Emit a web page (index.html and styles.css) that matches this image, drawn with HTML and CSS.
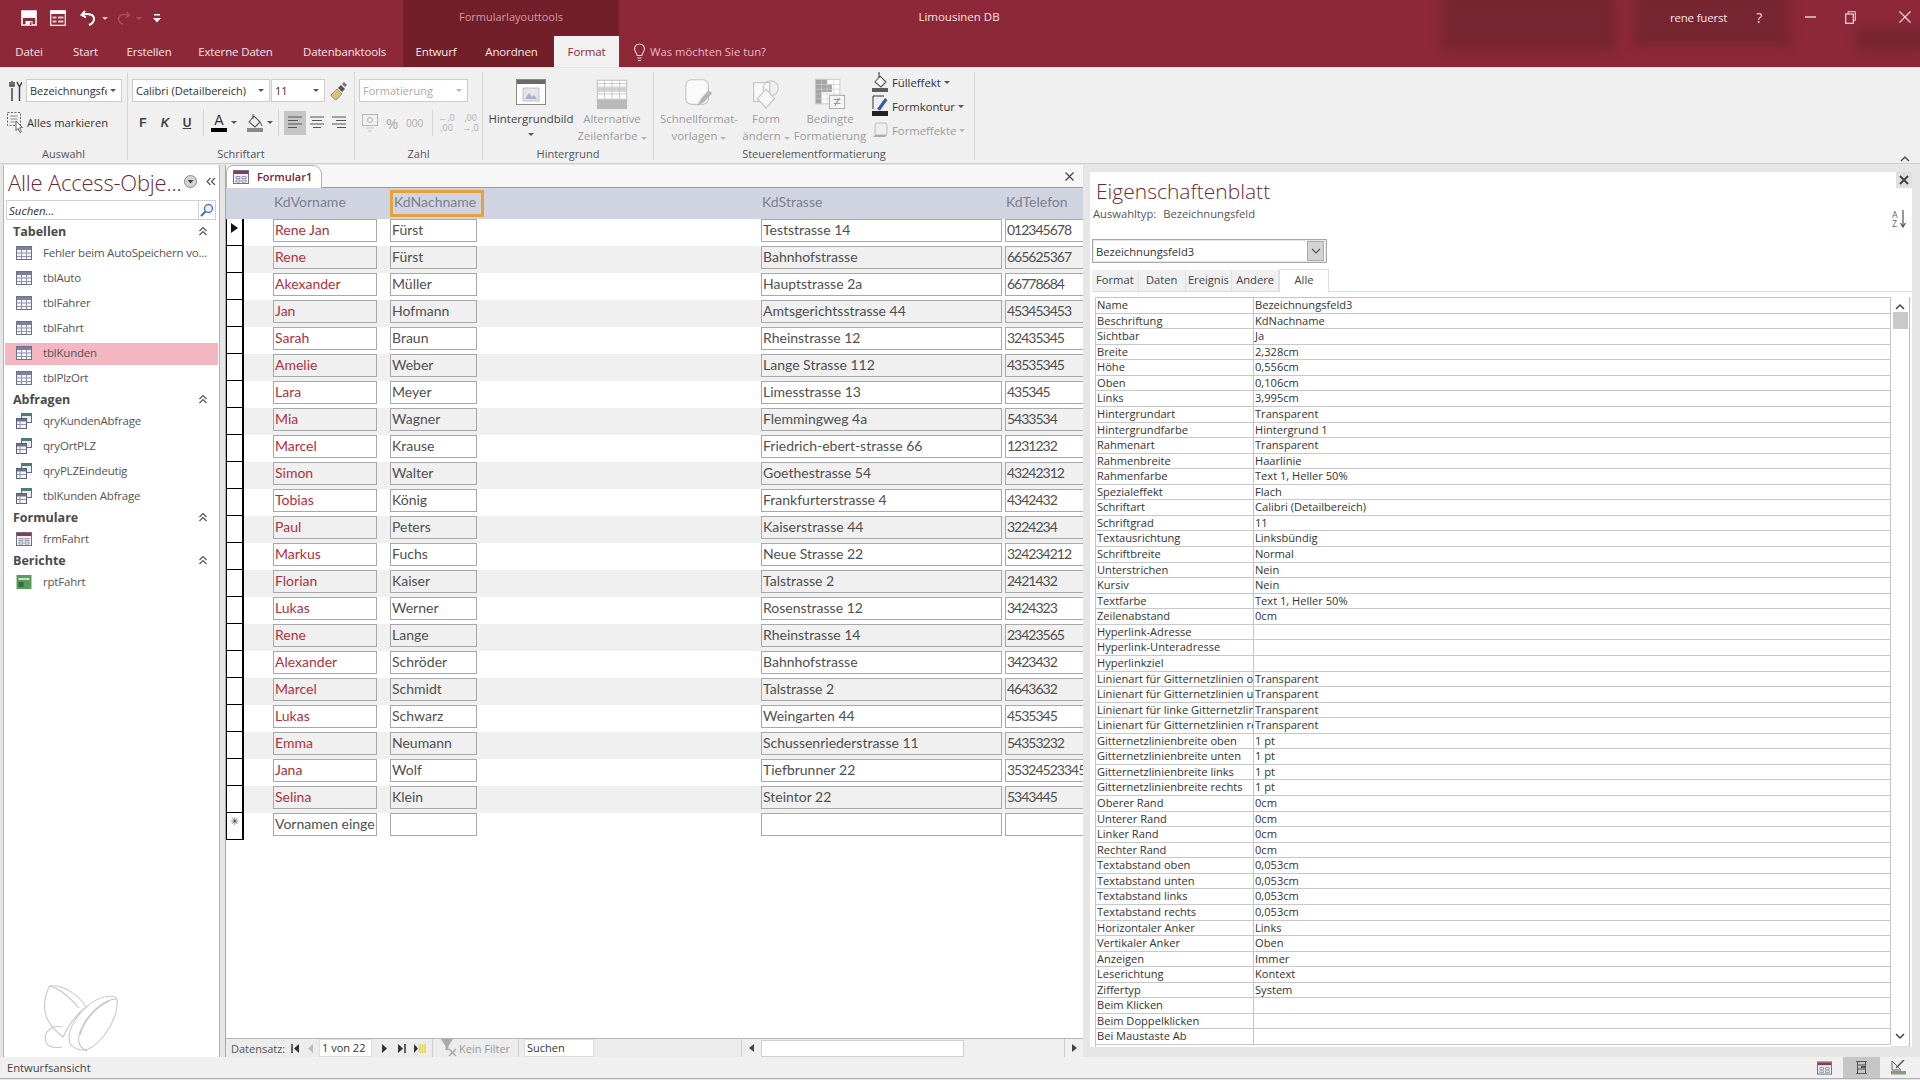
FILE: index.html
```html
<!DOCTYPE html>
<html lang="de">
<head>
<meta charset="utf-8">
<title>Limousinen DB</title>
<link rel="stylesheet" href="styles.css">
</head>
<body>
<svg class="defs" width="0" height="0">
  <symbol id="tbl" viewBox="0 0 16 14"><rect x=".5" y=".5" width="15" height="13" fill="#f4f4fa" stroke="#6c7088"/><rect x="1" y="1" width="14" height="3" fill="#7d8199"/><path d="M1 7h14M1 10.500h14M5.500 4v9M10.500 4v9" stroke="#8f93ad" fill="none"/></symbol>
  <symbol id="qry" viewBox="0 0 16 16"><rect x="5.500" y=".5" width="10" height="9" fill="#e9edf0" stroke="#4f7a78"/><rect x="6" y="1" width="9" height="2" fill="#4f7a78"/><rect x=".5" y="5.500" width="10" height="10" fill="#f6f6fa" stroke="#5c6078"/><rect x="1" y="6" width="9" height="2.500" fill="#6c7088"/><path d="M1 11.500h9M4 8.500v7" stroke="#8f93ad" fill="none"/></symbol>
  <symbol id="frm" viewBox="0 0 16 14"><rect x=".5" y=".5" width="15" height="13" fill="#f0f0f6" stroke="#6c7088"/><rect x="1" y="1" width="14" height="3" fill="#8a3a55"/><path d="M3 6.500h4v2H3zM9 6.500h4v2H9zM3 10h4v2H3zM9 10h4v2H9z" fill="#fff" stroke="#6c7088" stroke-width=".7"/></symbol>
  <symbol id="chev2" viewBox="0 0 10 10"><path d="M1.500 5l3.500-3.500L8.500 5M1.500 9L5 5.500 8.500 9" fill="none" stroke="#555" stroke-width="1.200"/></symbol>
</svg>

<header class="titlebar">
  <div class="patch patch-a"></div>
  <div class="patch patch-b"></div>
  <div class="patch patch-c"></div>
  <div class="toprow">
    <div class="qat">
      <svg class="q-save" width="16" height="16" viewBox="0 0 16 16"><path d="M1 1h14v14H1z" fill="none" stroke="#fff" stroke-width="1.600"/><path d="M1 1h14v7H1zM4.500 11h7v4h-7z" fill="#fff"/><path d="M9 12h1.500v3H9z" fill="#8c2838"/></svg>
      <svg class="q-form" width="16" height="16" viewBox="0 0 16 16"><rect x=".7" y=".7" width="14.600" height="14.600" fill="none" stroke="#fff" stroke-width="1.200"/><rect x="1" y="1" width="14" height="3" fill="#fff"/><path d="M2.500 6.500h4v2h-4zM8 6.500h5.500v2H8zM2.500 10.500h4v2h-4zM8 10.500h5.500v2H8z" fill="#e9c8cc"/></svg>
      <svg class="q-undo" width="18" height="18" viewBox="0 0 18 18"><path d="M5 2L1.500 6 6 8.500" fill="none" stroke="#fff" stroke-width="2"/><path d="M2.500 6C8 4 14 5.500 14 10c0 3-2.500 5-5 6" fill="none" stroke="#fff" stroke-width="2"/></svg>
      <i class="caret q-c1"></i>
      <svg class="q-redo" width="16" height="18" viewBox="0 0 18 18"><path d="M13 2l3.500 4L12 8.500" fill="none" stroke="#a9505c" stroke-width="1.600"/><path d="M15.500 6C10 4 4 5.500 4 10c0 3 2.500 5 5 6" fill="none" stroke="#a9505c" stroke-width="1.600"/></svg>
      <i class="caret caret-dim q-c2"></i>
      <svg class="q-more" width="8" height="9" viewBox="0 0 8 9"><path d="M1 0h6v1.500H1z" fill="#fff"/><path d="M0 4h8L4 8.500z" fill="#fff"/></svg>
    </div>
    <div class="ctx-label">Formularlayouttools</div>
    <div class="appname">Limousinen DB</div>
    <div class="account">
      <span class="user">rene fuerst</span>
      <span class="help">?</span>
      <svg class="w-min" width="11" height="2" viewBox="0 0 11 2"><path d="M0 1h11" stroke="#f3d9dc" stroke-width="1.400"/></svg>
      <svg class="w-max" width="11" height="13" viewBox="0 0 11 13"><path d="M3 2.500V.7h7.300v8.800H8.500" fill="none" stroke="#f3d9dc"/><rect x=".7" y="3" width="7.600" height="9.300" fill="none" stroke="#f3d9dc" stroke-width="1.200"/></svg>
      <svg class="w-close" width="12" height="12" viewBox="0 0 12 12"><path d="M.5.5l11 11M11.500.5l-11 11" stroke="#f3d9dc" stroke-width="1.100"/></svg>
    </div>
  </div>
  <nav class="tabrow">
    <span class="tab t-datei">Datei</span>
    <span class="tab t-start">Start</span>
    <span class="tab t-erst">Erstellen</span>
    <span class="tab t-ext">Externe Daten</span>
    <span class="tab t-db">Datenbanktools</span>
    <div class="ctx-tabs">
      <span class="tab t-entw">Entwurf</span>
      <span class="tab t-anord">Anordnen</span>
      <span class="tab t-format">Format</span>
    </div>
    <div class="tellme">
      <svg width="13" height="19" viewBox="0 0 13 19"><path d="M6.500 1A5 5 0 0 0 1.500 6c0 2.500 2.300 3.500 2.600 6.500h4.800C9.200 9.500 11.500 8.500 11.500 6A5 5 0 0 0 6.500 1z" fill="none" stroke="#f2d5d9" stroke-width="1.100"/><path d="M4.500 15h4M5 17.500h3" stroke="#f2d5d9" stroke-width="1.200"/></svg>
      <span>Was möchten Sie tun?</span>
    </div>
  </nav>
</header>

<section class="ribbon">
  <div class="group g-auswahl">
    <div class="rrow r1">
      <svg class="ic-obj" width="13" height="20" viewBox="0 0 13 20"><path d="M3 0v5M1 1v4h4V1M3 7v13" stroke="#444" stroke-width="1.500" fill="none"/><path d="M8 1l2.500 5L13 1M10.500 6v14" stroke="#444" stroke-width="1.500" fill="none"/></svg>
      <div class="combo c-obj"><span>Bezeichnungsfeld3</span><i class="caret caret-dk"></i></div>
    </div>
    <div class="rrow r2 markall">
      <svg width="17" height="21" viewBox="0 0 17 21"><rect x=".5" y=".5" width="13" height="13" fill="none" stroke="#666" stroke-dasharray="2 1.500"/><path d="M3.500 4h7M3.500 7h7M3.500 10h5" stroke="#888"/><path d="M9 9l6.500 6.500-3 .3 2 4-1.500.7-2-4-2 2z" fill="#fff" stroke="#444" stroke-width=".8"/></svg>
      <span>Alles markieren</span>
    </div>
    <div class="glabel">Auswahl</div>
  </div>

  <div class="group g-schrift">
    <div class="rrow r1">
      <div class="combo c-font"><span>Calibri (Detailbereich)</span><i class="caret caret-dk"></i></div>
      <div class="combo c-size"><span>11</span><i class="caret caret-dk"></i></div>
      <svg class="ic-paint" width="18" height="20" viewBox="0 0 18 20"><path d="M1 14l6-6 5 5-6 6c-2-.5-4-3-5-5z" fill="#d9bf79" stroke="#8d7a45" stroke-width=".7"/><path d="M8 7l3-3 4 4-3 3z" fill="#555"/><path d="M12 3l2-2 3 3-2 2z" fill="#777"/></svg>
    </div>
    <div class="rrow r2 fmt">
      <b class="fb">F</b><i class="fb fi">K</i><u class="fb fu">U</u>
      <span class="vsep vs1"></span>
      <span class="colorbtn"><span class="a-l">A</span><span class="bar bar-k"></span></span><i class="caret caret-dk ca1"></i>
      <span class="colorbtn cb2">
        <svg width="18" height="15" viewBox="0 0 18 15"><path d="M3 9l5-6 6 6-5 5z" fill="none" stroke="#555" stroke-width="1.100"/><path d="M7 1v5" stroke="#555"/><path d="M14 9c1 2 2 3 1.800 4" stroke="#777" fill="none" stroke-width="1.300"/></svg>
        <span class="bar bar-g"></span>
      </span><i class="caret caret-dk ca2"></i>
      <span class="vsep vs2"></span>
      <span class="alignbtn on"><svg width="14" height="13" viewBox="0 0 14 13"><path d="M0 1h14M0 4.500h10M0 8h14M0 11.500h9" stroke="#555" stroke-width="1.100"/></svg></span>
      <span class="alignbtn"><svg width="14" height="13" viewBox="0 0 14 13"><path d="M0 1h14M2 4.500h10M0 8h14M3 11.500h8" stroke="#555" stroke-width="1.100"/></svg></span>
      <span class="alignbtn"><svg width="14" height="13" viewBox="0 0 14 13"><path d="M0 1h14M4 4.500h10M0 8h14M5 11.500h9" stroke="#555" stroke-width="1.100"/></svg></span>
    </div>
    <div class="glabel">Schriftart</div>
  </div>

  <div class="group g-zahl">
    <div class="rrow r1">
      <div class="combo c-num dim"><span>Formatierung</span><i class="caret caret-lt"></i></div>
    </div>
    <div class="rrow r2 numrow">
      <svg class="n-cur" width="16" height="18" viewBox="0 0 16 18"><rect x=".5" y=".5" width="15" height="11" fill="none" stroke="#b5b5b5"/><circle cx="8" cy="6" r="2.500" fill="none" stroke="#b5b5b5"/><path d="M4 14h8M6 17h4" stroke="#c5c5c5"/></svg>
      <span class="n-pct">%</span>
      <span class="n-k">000</span>
      <span class="vsep vs3"></span>
      <span class="n-dec"><span>←,0</span><span>,00</span></span>
      <span class="n-dec n-dec2"><span>,00</span><span>→,0</span></span>
    </div>
    <div class="glabel">Zahl</div>
  </div>

  <div class="group g-hint">
    <div class="bigrow">
      <div class="big b-hb">
        <svg width="30" height="32" viewBox="0 0 30 32"><rect x=".5" y="2.500" width="29" height="25" fill="#fff" stroke="#8a8a8a"/><rect x="1" y="3" width="28" height="4" fill="#6a6a6a"/><rect x="7" y="11" width="16" height="13" fill="#e3e6ee" stroke="#aaa" stroke-width=".7"/><path d="M9 22l4-6 3 4 2-2 3 4z" fill="#a9b2c5"/></svg>
        <span class="blabel">Hintergrundbild</span>
        <i class="caret caret-dk"></i>
      </div>
      <div class="big b-alt dim">
        <svg width="32" height="36" viewBox="0 0 32 36"><rect x=".5" y="4.500" width="31" height="20" fill="#fff" stroke="#bdbdbd"/><path d="M1 11h30v6H1z" fill="#d6d6d6"/><path d="M1 8h30M1 14h30M1 19h30M8 5v19M16 5v19M24 5v19" stroke="#c6c6c6"/><rect y="25" width="32" height="10" fill="#b9b9b9"/></svg>
        <span class="blabel">Alternative<br>Zeilenfarbe <i class="caret caret-lt"></i></span>
      </div>
    </div>
    <div class="glabel">Hintergrund</div>
  </div>

  <div class="group g-steuer">
    <div class="bigrow">
      <div class="big b-sf dim">
        <svg width="32" height="36" viewBox="0 0 32 36"><rect x="2" y="4" width="24" height="26" rx="6" fill="#fafafa" stroke="#c4c4c4" stroke-width="1.200"/><path d="M14 32l4-8 8-9 4 3-8 9z" fill="#b5b5b5"/></svg>
        <span class="blabel">Schnellformat-<br>vorlagen <i class="caret caret-lt"></i></span>
      </div>
      <div class="big b-fa dim">
        <svg width="32" height="36" viewBox="0 0 32 36"><rect x="3" y="7" width="17" height="20" fill="#f8f8f8" stroke="#c4c4c4" stroke-width="1.200"/><circle cx="21" cy="13" r="8" fill="none" stroke="#c4c4c4" stroke-width="1.200"/><path d="M16 14l9 10-9 10-9-10z" fill="#f7f7f7" stroke="#c4c4c4" stroke-width="1.200"/></svg>
        <span class="blabel">Form<br>ändern <i class="caret caret-lt"></i></span>
      </div>
      <div class="big b-bf dim">
        <svg width="32" height="36" viewBox="0 0 32 36"><rect x=".5" y="3.500" width="26" height="26" fill="#fff" stroke="#c8c8c8"/><path d="M1 4h6v25H1zM7 4h6v5H7zM7 9h11v8H7z" fill="#a5a5a5"/><path d="M1 9h26M1 14h26M1 19h26M1 24h26M7 4v25M13 4v25M20 4v25" stroke="#cfcfcf" fill="none" stroke-width=".7"/><rect x="15.500" y="20.500" width="16" height="14" fill="#f5f5f5" stroke="#aaa"/><path d="M20 25h7M20 29h7M26 23l-5 9" stroke="#888" fill="none"/></svg>
        <span class="blabel">Bedingte<br>Formatierung</span>
      </div>
      <div class="smallcol">
        <div class="sitem">
          <svg width="17" height="22" viewBox="0 0 17 22"><path d="M3 11l5-6 6 6-5 5z" fill="#fff" stroke="#555" stroke-width="1.100"/><path d="M7 1v6" stroke="#555" stroke-width="1.300"/><rect y="17" width="16" height="4" fill="#5c5c5c"/></svg>
          <span>Fülleffekt</span><i class="caret caret-dk"></i>
        </div>
        <div class="sitem">
          <svg width="17" height="22" viewBox="0 0 17 22"><path d="M1 14V1h11" fill="none" stroke="#333"/><path d="M5 14l8-11 2.500 2L8 15.500z" fill="#3b5b9c"/><rect y="16" width="16" height="5" fill="#222"/></svg>
          <span>Formkontur</span><i class="caret caret-dk"></i>
        </div>
        <div class="sitem dim">
          <svg width="17" height="18" viewBox="0 0 17 18"><rect x="3" y="2" width="12" height="12" rx="2" fill="#eee" stroke="#bbb"/><path d="M3 14l-2 2h12l2-2" fill="#aaa"/></svg>
          <span>Formeffekte</span><i class="caret caret-lt"></i>
        </div>
      </div>
    </div>
    <div class="glabel">Steuerelementformatierung</div>
  </div>

  <div class="collapse"><svg width="10" height="7" viewBox="0 0 10 7"><path d="M1 6l4-4 4 4" fill="none" stroke="#555" stroke-width="1.500"/></svg></div>
</section>

<main class="workspace">
  <aside class="navpane">
    <div class="navtitle">
      <span class="navt">Alle Access-Obje...</span>
      <svg class="nav-dd" width="13" height="13" viewBox="0 0 13 13"><circle cx="6.500" cy="6.500" r="6" fill="#d4d4d4" stroke="#8a8a8a"/><path d="M3.500 5h6l-3 3.500z" fill="#444"/></svg>
      <svg class="nav-col" width="10" height="9" viewBox="0 0 10 9"><path d="M4.500 1L1 4.500 4.500 8M9 1L5.500 4.500 9 8" fill="none" stroke="#555" stroke-width="1.200"/></svg>
    </div>
    <div class="navsearch">
      <span>Suchen...</span>
      <i class="navsearch-btn"><svg width="14" height="14" viewBox="0 0 14 14"><circle cx="8.500" cy="5.500" r="4" fill="#eef2f8" stroke="#5a7bb0" stroke-width="1.500"/><path d="M5.500 8.500L1 13" stroke="#4a6a9f" stroke-width="2"/></svg></i>
    </div>
    <div class="navhead first"><span>Tabellen</span><svg width="10" height="10"><use href="#chev2"/></svg></div>
    <div class="navitem"><svg width="16" height="14"><use href="#tbl"/></svg><span>Fehler beim AutoSpeichern vo...</span></div>
    <div class="navitem"><svg width="16" height="14"><use href="#tbl"/></svg><span>tblAuto</span></div>
    <div class="navitem"><svg width="16" height="14"><use href="#tbl"/></svg><span>tblFahrer</span></div>
    <div class="navitem"><svg width="16" height="14"><use href="#tbl"/></svg><span>tblFahrt</span></div>
    <div class="navitem sel"><svg width="16" height="14"><use href="#tbl"/></svg><span>tblKunden</span></div>
    <div class="navitem"><svg width="16" height="14"><use href="#tbl"/></svg><span>tblPlzOrt</span></div>
    <div class="navhead"><span>Abfragen</span><svg width="10" height="10"><use href="#chev2"/></svg></div>
    <div class="navitem"><svg width="16" height="16"><use href="#qry"/></svg><span>qryKundenAbfrage</span></div>
    <div class="navitem"><svg width="16" height="16"><use href="#qry"/></svg><span>qryOrtPLZ</span></div>
    <div class="navitem"><svg width="16" height="16"><use href="#qry"/></svg><span>qryPLZEindeutig</span></div>
    <div class="navitem"><svg width="16" height="16"><use href="#qry"/></svg><span>tblKunden Abfrage</span></div>
    <div class="navhead"><span>Formulare</span><svg width="10" height="10"><use href="#chev2"/></svg></div>
    <div class="navitem"><svg width="16" height="14"><use href="#frm"/></svg><span>frmFahrt</span></div>
    <div class="navhead"><span>Berichte</span><svg width="10" height="10"><use href="#chev2"/></svg></div>
    <div class="navitem"><svg width="15" height="14" viewBox="0 0 15 14"><rect width="15" height="14" fill="#5a9a5a"/><path d="M2 3h11v2H2z" fill="#c5e2c5"/><path d="M2 7h5v5H2z" fill="#2f6f3f"/></svg><span>rptFahrt</span></div>
    <svg class="butterfly" width="78" height="70" viewBox="0 0 74 70" preserveAspectRatio="none" fill="none" stroke="#c6c6c6" stroke-width="1">
      <path d="M8 3C4 12 1 25 6 36c3 7 9 13 15 18 6-14 14-24 22-30C36 13 22 1 8 3z"/>
      <path d="M8 3c6 1 18 9 28 22"/>
      <path d="M20 44c-8-2-16 3-16 11 0 8 7 11 16 9"/>
      <path d="M72 16c-3-5-17-3-28 7C33 33 25 47 27 58c1 7 11 11 18 8 12-6 22-22 26-36 1-5 2-10 1-14z"/>
      <path d="M72 16c-12 0-26 13-33 28-5 11-5 20 5 24"/>
      <path d="M65 18C52 24 41 37 37 52"/>
    </svg>
  </aside>

  <section class="formpane">
    <div class="doctabs">
      <div class="doctab"><svg width="16" height="14"><use href="#frm"/></svg><span>Formular1</span></div>
      <svg class="docclose" width="9" height="9" viewBox="0 0 9 9"><path d="M.5.5l8 8M8.500.5l-8 8" stroke="#444" stroke-width="1.200"/></svg>
    </div>
    <div class="fhead">
      <span class="fh fh-v">KdVorname</span>
      <span class="fh fh-n">KdNachname</span>
      <span class="fh fh-s">KdStrasse</span>
      <span class="fh fh-t">KdTelefon</span>
    </div>
    <div class="records">
      <div class="rec"><span class="sel-box cur"><i class="arrow"></i></span><span class="ctl v">Rene Jan</span><span class="ctl n">Fürst</span><span class="ctl s">Teststrasse 14</span><span class="ctl t">012345678</span></div>
      <div class="rec alt"><span class="sel-box"></span><span class="ctl v">Rene</span><span class="ctl n">Fürst</span><span class="ctl s">Bahnhofstrasse</span><span class="ctl t">665625367</span></div>
      <div class="rec"><span class="sel-box"></span><span class="ctl v">Akexander</span><span class="ctl n">Müller</span><span class="ctl s">Hauptstrasse 2a</span><span class="ctl t">66778684</span></div>
      <div class="rec alt"><span class="sel-box"></span><span class="ctl v">Jan</span><span class="ctl n">Hofmann</span><span class="ctl s">Amtsgerichtsstrasse 44</span><span class="ctl t">453453453</span></div>
      <div class="rec"><span class="sel-box"></span><span class="ctl v">Sarah</span><span class="ctl n">Braun</span><span class="ctl s">Rheinstrasse 12</span><span class="ctl t">32435345</span></div>
      <div class="rec alt"><span class="sel-box"></span><span class="ctl v">Amelie</span><span class="ctl n">Weber</span><span class="ctl s">Lange Strasse 112</span><span class="ctl t">43535345</span></div>
      <div class="rec"><span class="sel-box"></span><span class="ctl v">Lara</span><span class="ctl n">Meyer</span><span class="ctl s">Limesstrasse 13</span><span class="ctl t">435345</span></div>
      <div class="rec alt"><span class="sel-box"></span><span class="ctl v">Mia</span><span class="ctl n">Wagner</span><span class="ctl s">Flemmingweg 4a</span><span class="ctl t">5433534</span></div>
      <div class="rec"><span class="sel-box"></span><span class="ctl v">Marcel</span><span class="ctl n">Krause</span><span class="ctl s">Friedrich-ebert-strasse 66</span><span class="ctl t">1231232</span></div>
      <div class="rec alt"><span class="sel-box"></span><span class="ctl v">Simon</span><span class="ctl n">Walter</span><span class="ctl s">Goethestrasse 54</span><span class="ctl t">43242312</span></div>
      <div class="rec"><span class="sel-box"></span><span class="ctl v">Tobias</span><span class="ctl n">König</span><span class="ctl s">Frankfurterstrasse 4</span><span class="ctl t">4342432</span></div>
      <div class="rec alt"><span class="sel-box"></span><span class="ctl v">Paul</span><span class="ctl n">Peters</span><span class="ctl s">Kaiserstrasse 44</span><span class="ctl t">3224234</span></div>
      <div class="rec"><span class="sel-box"></span><span class="ctl v">Markus</span><span class="ctl n">Fuchs</span><span class="ctl s">Neue Strasse 22</span><span class="ctl t">324234212</span></div>
      <div class="rec alt"><span class="sel-box"></span><span class="ctl v">Florian</span><span class="ctl n">Kaiser</span><span class="ctl s">Talstrasse 2</span><span class="ctl t">2421432</span></div>
      <div class="rec"><span class="sel-box"></span><span class="ctl v">Lukas</span><span class="ctl n">Werner</span><span class="ctl s">Rosenstrasse 12</span><span class="ctl t">3424323</span></div>
      <div class="rec alt"><span class="sel-box"></span><span class="ctl v">Rene</span><span class="ctl n">Lange</span><span class="ctl s">Rheinstrasse 14</span><span class="ctl t">23423565</span></div>
      <div class="rec"><span class="sel-box"></span><span class="ctl v">Alexander</span><span class="ctl n">Schröder</span><span class="ctl s">Bahnhofstrasse</span><span class="ctl t">3423432</span></div>
      <div class="rec alt"><span class="sel-box"></span><span class="ctl v">Marcel</span><span class="ctl n">Schmidt</span><span class="ctl s">Talstrasse 2</span><span class="ctl t">4643632</span></div>
      <div class="rec"><span class="sel-box"></span><span class="ctl v">Lukas</span><span class="ctl n">Schwarz</span><span class="ctl s">Weingarten 44</span><span class="ctl t">4535345</span></div>
      <div class="rec alt"><span class="sel-box"></span><span class="ctl v">Emma</span><span class="ctl n">Neumann</span><span class="ctl s">Schussenriederstrasse 11</span><span class="ctl t">54353232</span></div>
      <div class="rec"><span class="sel-box"></span><span class="ctl v">Jana</span><span class="ctl n">Wolf</span><span class="ctl s">Tiefbrunner 22</span><span class="ctl t">35324523345</span></div>
      <div class="rec alt"><span class="sel-box"></span><span class="ctl v">Selina</span><span class="ctl n">Klein</span><span class="ctl s">Steintor 22</span><span class="ctl t">5343445</span></div>
      <div class="rec"><span class="sel-box star">✳</span><span class="ctl v new">Vornamen einge</span><span class="ctl n"></span><span class="ctl s"></span><span class="ctl t"></span></div>
    </div>
    <div class="recnav">
      <span class="rn-label">Datensatz:</span>
      <svg class="rn-first" width="8" height="9" viewBox="0 0 8 9"><path d="M1 0v9" stroke="#333" stroke-width="1.500"/><path d="M8 0v9L3 4.500z" fill="#333"/></svg>
      <svg class="rn-prev" width="5" height="9" viewBox="0 0 5 9"><path d="M5 0v9L0 4.500z" fill="#bbb"/></svg>
      <span class="rn-input">1 von 22</span>
      <svg class="rn-next" width="5" height="9" viewBox="0 0 5 9"><path d="M0 0v9l5-4.500z" fill="#333"/></svg>
      <svg class="rn-last" width="8" height="9" viewBox="0 0 8 9"><path d="M0 0v9l5-4.500z" fill="#333"/><path d="M7 0v9" stroke="#333" stroke-width="1.500"/></svg>
      <svg class="rn-new" width="12" height="9" viewBox="0 0 12 9"><path d="M0 0v9l4-4.500z" fill="#333"/><path d="M6 0v9M8.500 0v9M11 0v9" stroke="#e8d24a" stroke-width="1.500"/></svg>
      <span class="rn-sep rs1"></span>
      <svg class="rn-filter" width="17" height="18" viewBox="0 0 17 18"><path d="M0 0h12L7.500 7v4H4.500V7z" fill="#aaa"/><path d="M8 10l7 7M15 10l-7 7" stroke="#aaa" stroke-width="1.500"/></svg>
      <span class="rn-nofilter">Kein Filter</span>
      <span class="rn-sep"></span>
      <span class="rn-search">Suchen</span>
      <div class="hscroll">
        <i class="sc-arrow"><svg width="5" height="8" viewBox="0 0 5 8"><path d="M5 0v8L0 4z" fill="#444"/></svg></i>
        <span class="hthumb"></span>
        <i class="sc-arrow sc-right"><svg width="5" height="8" viewBox="0 0 5 8"><path d="M0 0v8l5-4z" fill="#444"/></svg></i>
      </div>
    </div>
  </section>

  <aside class="props">
    <div class="phead">
      <div class="ptitles">
        <div class="ptitle">Eigenschaftenblatt</div>
        <div class="psub"><span>Auswahltyp:</span><span>Bezeichnungsfeld</span></div>
      </div>
      <div class="ptools">
        <span class="pclose"><svg width="10" height="10" viewBox="0 0 10 10"><path d="M1 1l8 8M9 1l-8 8" stroke="#444" stroke-width="2"/></svg></span>
        <svg class="paz" width="15" height="18" viewBox="0 0 15 18"><path d="M11 0v16M8.500 13l2.500 4 2.500-4" fill="none" stroke="#555" stroke-width="1.200"/><text x="0" y="8" class="azt">A</text><text x="0" y="17" class="azt">Z</text></svg>
      </div>
    </div>
    <div class="pcombo"><span>Bezeichnungsfeld3</span><i class="pcombo-btn"><svg width="10" height="6" viewBox="0 0 10 6"><path d="M1 1l4 4 4-4" fill="none" stroke="#555" stroke-width="1.200"/></svg></i></div>
    <div class="ptabs">
      <span class="ptab">Format</span><span class="ptab">Daten</span><span class="ptab">Ereignis</span><span class="ptab">Andere</span><span class="ptab on">Alle</span>
    </div>
    <div class="pbody">
      <div class="pgrid">
        <span>Name</span><span>Bezeichnungsfeld3</span>
        <span>Beschriftung</span><span>KdNachname</span>
        <span>Sichtbar</span><span>Ja</span>
        <span>Breite</span><span>2,328cm</span>
        <span>Höhe</span><span>0,556cm</span>
        <span>Oben</span><span>0,106cm</span>
        <span>Links</span><span>3,995cm</span>
        <span>Hintergrundart</span><span>Transparent</span>
        <span>Hintergrundfarbe</span><span>Hintergrund 1</span>
        <span>Rahmenart</span><span>Transparent</span>
        <span>Rahmenbreite</span><span>Haarlinie</span>
        <span>Rahmenfarbe</span><span>Text 1, Heller 50%</span>
        <span>Spezialeffekt</span><span>Flach</span>
        <span>Schriftart</span><span>Calibri (Detailbereich)</span>
        <span>Schriftgrad</span><span>11</span>
        <span>Textausrichtung</span><span>Linksbündig</span>
        <span>Schriftbreite</span><span>Normal</span>
        <span>Unterstrichen</span><span>Nein</span>
        <span>Kursiv</span><span>Nein</span>
        <span>Textfarbe</span><span>Text 1, Heller 50%</span>
        <span>Zeilenabstand</span><span>0cm</span>
        <span>Hyperlink-Adresse</span><span></span>
        <span>Hyperlink-Unteradresse</span><span></span>
        <span>Hyperlinkziel</span><span></span>
        <span>Linienart für Gitternetzlinien oben</span><span>Transparent</span>
        <span>Linienart für Gitternetzlinien unten</span><span>Transparent</span>
        <span>Linienart für linke Gitternetzlinie</span><span>Transparent</span>
        <span>Linienart für Gitternetzlinien rechts</span><span>Transparent</span>
        <span>Gitternetzlinienbreite oben</span><span>1 pt</span>
        <span>Gitternetzlinienbreite unten</span><span>1 pt</span>
        <span>Gitternetzlinienbreite links</span><span>1 pt</span>
        <span>Gitternetzlinienbreite rechts</span><span>1 pt</span>
        <span>Oberer Rand</span><span>0cm</span>
        <span>Unterer Rand</span><span>0cm</span>
        <span>Linker Rand</span><span>0cm</span>
        <span>Rechter Rand</span><span>0cm</span>
        <span>Textabstand oben</span><span>0,053cm</span>
        <span>Textabstand unten</span><span>0,053cm</span>
        <span>Textabstand links</span><span>0,053cm</span>
        <span>Textabstand rechts</span><span>0,053cm</span>
        <span>Horizontaler Anker</span><span>Links</span>
        <span>Vertikaler Anker</span><span>Oben</span>
        <span>Anzeigen</span><span>Immer</span>
        <span>Leserichtung</span><span>Kontext</span>
        <span>Ziffertyp</span><span>System</span>
        <span>Beim Klicken</span><span></span>
        <span>Beim Doppelklicken</span><span></span>
        <span>Bei Maustaste Ab</span><span></span>
      </div>
      <div class="vscroll">
        <svg width="10" height="7" viewBox="0 0 10 7"><path d="M1 6l4-4 4 4" fill="none" stroke="#444" stroke-width="1.500"/></svg>
        <span class="vthumb"></span>
        <svg class="vdown" width="10" height="7" viewBox="0 0 10 7"><path d="M1 1l4 4 4-4" fill="none" stroke="#444" stroke-width="1.500"/></svg>
      </div>
    </div>
  </aside>
</main>

<footer class="statusbar">
  <span class="st-text">Entwurfsansicht</span>
  <span class="st-views">
    <span class="st-v"><svg width="15" height="14"><use href="#frm"/></svg></span>
    <span class="st-v on"><svg width="13" height="13" viewBox="0 0 13 13"><path d="M1 .5h11M1 12.500h11M2.500 0v13M10.500 0v13M2.500 4h8M2.500 8h8" stroke="#555" fill="none"/><path d="M6 5h5v2H6z" fill="#555"/></svg></span>
    <span class="st-v"><svg width="15" height="15" viewBox="0 0 15 15"><path d="M1 1v9h9z" fill="none" stroke="#666"/><path d="M5 8l8-8" stroke="#556" stroke-width="1.500"/><rect x="0" y="11" width="15" height="3.500" fill="#8a9b7d"/></svg></span>
  </span>
</footer>
</body>
</html>
```

FILE: styles.css
```css
* { box-sizing: border-box; }
html, body { margin: 0; padding: 0; }
body {
  width: 1920px;
  height: 1080px;
  overflow: hidden;
  background: #e6e6e6;
  font-family: "Open Sans", "Liberation Sans", sans-serif;
  font-size: 11.400px;
  color: #444;
}
.defs { position: absolute; }
i { font-style: normal; }

/* title bar */
.titlebar { position: relative; height: 67px; background: #8c2838; color: #fff; overflow: hidden; }
.patch { position: absolute; background: #772530; filter: blur(5px); }
.patch-a { left: 1442px; top: -8px; width: 173px; height: 58px; }
.patch-b { left: 1634px; top: -8px; width: 156px; height: 54px; }
.patch-c { left: 1858px; top: 28px; width: 70px; height: 22px; }
.toprow { position: relative; display: flex; height: 36px; }
.qat { position: relative; width: 403px; display: flex; align-items: center; padding-left: 21px; }
.q-form { margin-left: 13px; }
.q-undo { margin-left: 14px; }
.q-c1 { margin-left: 4px; }
.q-redo { margin-left: 7px; }
.q-c2 { margin-left: 5px; }
.q-more { margin-left: 11px; }
.caret { display: inline-block; flex: none; width: 0; height: 0; border-left: 3px solid transparent; border-right: 3px solid transparent; border-top: 3px solid #e9c8cc; }
.caret-dim { border-top-color: #a9505c; }
.caret-dk { border-top-color: #555; }
.caret-lt { border-top-color: #b5b5b5; }
.ctx-label { width: 216px; background: #731f2a; color: #d59aa2; font-size: 11px; text-align: center; line-height: 34px; }
.appname { width: 680px; text-align: center; font-size: 11.500px; line-height: 34px; color: #f6e4e6; }
.account { flex: 1; display: flex; align-items: center; height: 34px; position: relative; }
.user { margin-left: 371px; font-size: 11.500px; letter-spacing: -.2px; color: #f6e4e6; }
.help { margin-left: 29px; font-size: 14px; color: #f3d9dc; }
.w-min { margin-left: 43px; }
.w-max { margin-left: 29px; }
.w-close { margin-left: 43px; }
.tabrow { position: relative; display: flex; height: 31px; font-size: 11.500px; letter-spacing: -.15px; color: #f6e4e6; }
.tab { display: block; text-align: center; line-height: 31px; }
.t-datei { width: 58px; }
.t-start { width: 55px; }
.t-erst { width: 72px; }
.t-ext { width: 101px; }
.t-db { width: 117px; }
.ctx-tabs { display: flex; width: 216px; background: #731f2a; }
.t-entw { width: 66px; }
.t-anord { width: 85px; }
.t-format { width: 65px; background: #f1f1f1; color: #8c2838; }
.tellme { display: flex; align-items: center; margin-left: 14px; color: #eab8bf; gap: 4px; font-size: 11.300px; letter-spacing: 0; }
.tellme svg { margin-top: 2px; }

/* ribbon */
.ribbon { position: relative; display: flex; height: 97px; background: #f0f0f0; border-top: 1px solid #f6dfe2; border-bottom: 1px solid #cfcfcf; padding-top: 4px; }
.group { position: relative; display: flex; flex-direction: column; height: 88px; border-right: 1px solid #d6d6d6; }
.g-auswahl { width: 128px; padding-left: 9px; }
.g-schrift { width: 227px; padding-left: 4px; }
.g-zahl { width: 128px; padding-left: 4px; }
.g-hint { width: 171px; }
.g-steuer { width: 321px; }
.rrow { display: flex; align-items: center; }
.r1 { height: 23px; margin-top: 7px; }
.r2 { height: 25px; margin-top: 8px; }
.ic-obj { margin-right: 4px; }
.combo { display: flex; align-items: center; gap: 3px; height: 23px; background: #fff; border: 1px solid #ccc; padding: 0 5px 0 3px; white-space: nowrap; overflow: hidden; color: #333; font-size: 11px; }
.combo span { flex: 1; min-width: 0; overflow: hidden; }
.c-obj { width: 96px; }
.c-font { width: 138px; margin-right: 1px; }
.c-size { width: 54px; }
.ic-paint { margin-left: 5px; }
.c-num { width: 109px; }
.dim { color: #9c9c9c; }
.combo.dim { color: #a8a8a8; }
.markall { margin-left: -2px; gap: 3px; color: #333; font-size: 11.200px; }
.fb { width: 22px; text-align: center; font-family: "Liberation Sans", sans-serif; font-size: 12px; font-weight: 700; color: #444; text-decoration: none; }
.fi { font-style: italic; }
.fu { text-decoration: underline; }
.vsep { width: 1px; height: 26px; background: #d4d4d4; }
.vs1 { margin: 0 6px 0 5px; }
.vs2 { margin: 0 5px; }
.vs3 { margin: 0 5px 0 6px; }
.colorbtn { display: flex; flex-direction: column; align-items: center; width: 18px; }
.cb2 { margin-left: 9px; }
.a-l { font-family: "Liberation Sans", sans-serif; font-size: 14px; line-height: 15px; color: #333; }
.bar { display: block; width: 16px; height: 4px; }
.bar-k { background: #000; }
.bar-g { background: #8a8a8a; }
.ca1 { margin-left: 3px; }
.ca2 { margin-left: 3px; }
.alignbtn { display: flex; align-items: center; justify-content: center; width: 22px; height: 24px; }
.alignbtn.on { background: #c6c6c6; }
.numrow { padding-left: 3px; color: #aaa; }
.n-pct { margin-left: 8px; font-size: 15px; width: 17px; }
.n-k { margin-left: 3px; font-size: 10px; width: 20px; color: #aaa; }
.n-dec { display: flex; flex-direction: column; font-size: 9px; line-height: 10px; width: 17px; text-align: center; color: #b0b0b0; white-space: nowrap; }
.n-dec2 { margin-left: 7px; }
.glabel { position: absolute; left: 0; right: 0; bottom: -1px; text-align: center; line-height: 14px; font-size: 11px; color: #555; }
.bigrow { display: flex; height: 72px; }
.big { display: flex; flex-direction: column; align-items: center; padding-top: 4px; text-align: center; line-height: 17px; font-size: 11.400px; color: #444; white-space: nowrap; }
.big svg { height: 34px; }
.big.dim { color: #9c9c9c; }
.b-hb { width: 96px; }
.b-hb .caret { margin-top: 6px; }
.b-alt { width: 66px; }
.b-sf { width: 90px; }
.b-fa { width: 44px; }
.b-bf { width: 84px; }
.smallcol { display: flex; flex-direction: column; margin-top: -2px; }
.sitem { display: flex; align-items: center; height: 24px; gap: 3px; color: #333; white-space: nowrap; font-size: 11.300px; }
.sitem.dim { color: #9c9c9c; }
.collapse { position: absolute; right: 10px; top: 82px; }

/* workspace */
.workspace { display: flex; height: 893px; padding-top: 1px; }
.navpane { display: flex; flex-direction: column; width: 217px; margin-left: 3px; background: #fff; border-left: 1px solid #b5b5b5; border-right: 1px solid #b5b5b5; }
.navtitle { display: flex; align-items: center; height: 35px; padding: 0 0 2px 4px; }
.navt { width: 172px; font-size: 22px; font-weight: 300; color: #6b2a33; white-space: nowrap; letter-spacing: -.2px; }
.nav-dd { margin-left: 4px; }
.nav-col { margin-left: 9px; }
.navsearch { display: flex; align-items: center; justify-content: space-between; height: 20px; margin: 0 3px 0 2px; border: 1px solid #d0d0d0; font-style: italic; color: #333; font-size: 11.500px; padding-left: 2px; }
.navsearch-btn { display: flex; align-items: center; justify-content: center; width: 17px; height: 18px; border-left: 1px solid #d0d0d0; }
.navhead { display: flex; align-items: center; justify-content: space-between; height: 18px; padding: 0 11px 0 9px; font-weight: 700; font-size: 12.500px; color: #4a4a4a; }
.navhead.first { margin-top: 2px; }
.navitem { display: flex; align-items: center; height: 25px; padding-left: 12px; font-size: 11.500px; letter-spacing: -.2px; color: #555; white-space: nowrap; }
.navitem svg { width: 16px; flex: none; margin-right: 11px; }
.navitem.sel { background: linear-gradient(#f4b6c0, #f4b6c0) 1px 3px / calc(100% - 2px) 22px no-repeat; }
.butterfly { margin: auto 0 4px 37px; }

/* form */
.formpane { display: flex; flex-direction: column; width: 858px; margin-left: 5px; background: #fff; border-left: 1px solid #a8a8a8; overflow: hidden; }
.doctabs { display: flex; justify-content: space-between; align-items: center; flex: none; height: 23px; background: #f7f7f7; border-bottom: 1px solid #9c9c9c; padding-right: 9px; }
.doctab { display: flex; align-items: center; gap: 8px; width: 96px; height: 23px; background: #fff; border: 1px solid #b4b4b4; border-bottom: 0; border-radius: 7px 9px 0 0; padding-left: 6px; font-size: 11px; font-weight: 600; color: #7a2030; }
.fhead { display: flex; flex: none; align-items: center; height: 31px; background: #d0d4e0; font-family: Lato, "Open Sans", sans-serif; font-size: 14px; color: #7b808e; }
.fh { display: block; line-height: 24px; height: 27px; white-space: nowrap; }
.fh-v { margin-left: 48px; width: 116px; }
.fh-n { width: 94px; border: 3px solid #e6a13c; padding-left: 1px; line-height: 18px; }
.fh-s { margin-left: 278px; width: 244px; }
.records { flex: 1; min-height: 0; font-family: Lato, "Open Sans", sans-serif; font-size: 14px; }
.rec { display: grid; grid-template-columns: 18px 134px 100px 524px 1fr; height: 27px; }
.rec.alt { background: #f0f0f0; }
.sel-box { display: flex; align-items: flex-start; justify-content: center; height: 27px; border-left: 1px solid #000; border-right: 2px solid #000; border-bottom: 1px solid #000; background: #fff; font-size: 13px; color: #444; line-height: 16px; }
.arrow { display: block; margin-top: 4px; width: 0; height: 0; border-left: 7px solid #111; border-top: 5px solid transparent; border-bottom: 5px solid transparent; }
.ctl { display: block; height: 23px; border: 1px solid #a8a8a8; padding-left: 1px; line-height: 20px; white-space: nowrap; overflow: hidden; color: #4f4f4f; }
.ctl.v { margin-left: 29px; width: 104px; color: #b0303f; }
.ctl.n { margin-left: 12px; width: 87px; }
.ctl.s { margin-left: 283px; width: 241px; }
.ctl.t { margin-left: 3px; width: 100px; letter-spacing: -1px; }
.ctl.new { color: #4f4f4f; }
.star { font-size: 11px; }
.recnav { display: flex; flex: none; align-items: center; height: 19px; background: #ececec; border-top: 1px solid #b5b5b5; font-size: 11px; color: #555; white-space: nowrap; }
.rn-label { margin-left: 5px; width: 58px; }
.rn-first { margin-left: 2px; }
.rn-prev { margin-left: 9px; }
.rn-input { margin-left: 6px; width: 53px; height: 18px; background: #fff; border: 1px solid #ddd; line-height: 15px; padding-left: 2px; color: #333; }
.rn-next { margin-left: 10px; }
.rn-last { margin-left: 11px; }
.rn-new { margin-left: 8px; }
.rn-sep { width: 1px; height: 18px; background: #cfcfcf; }
.rs1 { margin-left: 6px; }
.rn-filter { margin-left: 8px; flex: none; }
.rn-nofilter { margin-left: 1px; width: 59px; color: #999; }
.rn-search { margin-left: 5px; width: 70px; height: 18px; background: #fff; border: 1px solid #ddd; line-height: 15px; padding-left: 2px; color: #333; }
.hscroll { display: flex; align-items: center; flex: 1; height: 18px; margin-left: 147px; background: #f0f0f0; border-left: 1px solid #ccc; }
.sc-arrow { display: flex; align-items: center; justify-content: center; width: 19px; height: 18px; }
.sc-right { margin-left: auto; border-left: 1px solid #ccc; }
.hthumb { display: block; width: 203px; height: 17px; background: #fff; border: 1px solid #cfcfcf; }

/* properties */
.props { display: flex; flex-direction: column; width: 822px; margin: 7px 0 10px 7px; background: #fff; }
.phead { display: flex; justify-content: space-between; flex: none; height: 61px; padding-left: 3px; }
.ptitle { margin: 5px 0 0 3px; font-size: 21px; font-weight: 300; line-height: 29px; color: #6b2a33; }
.psub { display: flex; gap: 7px; font-size: 11.200px; line-height: 16px; color: #555; }
.ptools { display: flex; flex-direction: column; align-items: flex-end; }
.pclose { display: flex; align-items: center; justify-content: center; width: 16px; height: 16px; background: #e0e0e0; }
.paz { margin: 22px 5px 0 0; }
.azt { font-family: "Open Sans", sans-serif; font-size: 9px; fill: #666; }
.pcombo { display: flex; align-items: center; justify-content: space-between; flex: none; width: 235px; height: 24px; margin: 6px 0 0 2px; border: 1px solid #a8a8a8; padding-left: 3px; font-size: 11.200px; color: #333; box-shadow: inset 0 0 0 1px #e6e6e6; }
.pcombo-btn { display: flex; align-items: center; justify-content: center; width: 17px; height: 20px; margin-right: 2px; background: #d4d4d4; border: 1px solid #aaa; }
.ptabs { display: flex; align-items: flex-end; flex: none; height: 29px; margin-left: 2px; border-bottom: 1px solid #dcdcdc; }
.ptab { width: 46.750px; height: 21px; background: #f0f0f0; border-right: 1px solid #e0e0e0; text-align: center; line-height: 20px; font-size: 11.200px; color: #444; }
.ptab.on { width: 50px; height: 23px; background: #fff; border: 1px solid #dcdcdc; border-bottom: 0; margin-bottom: -1px; }
.pbody { display: flex; flex: 1; min-height: 0; margin: 5px 2px 0 5px; border-right: 1px solid #bdbdbd; }
.pgrid { display: grid; grid-template-columns: 158px 1fr; grid-auto-rows: 15.570px; width: 796px; flex: none; align-content: start; border-top: 1px solid #c4c4c4; border-left: 1px solid #c4c4c4; font-size: 11.100px; color: #333; }
.pgrid span { display: block; line-height: 14px; padding-left: 1px; white-space: nowrap; overflow: hidden; border-bottom: 1px solid #c8c8c8; border-right: 1px solid #c4c4c4; }
.vscroll { display: flex; flex-direction: column; align-items: center; flex: 1; padding-top: 6px; border-bottom: 1px solid #e0e0e0; }
.vthumb { display: block; width: 15px; height: 17px; margin-top: 2px; background: #c9c9c9; }
.vdown { margin-top: auto; margin-bottom: 6px; }

/* status */
.statusbar { display: flex; align-items: center; justify-content: space-between; height: 22px; background: #f0f0f0; border-bottom: 1px solid #b0b0b0; }
.st-text { margin-left: 7px; font-size: 11.200px; color: #444; }
.st-views { display: flex; height: 21px; margin-right: 3px; }
.st-v { display: flex; align-items: center; justify-content: center; width: 37px; }
.st-v.on { background: #c6c6c6; }
```
